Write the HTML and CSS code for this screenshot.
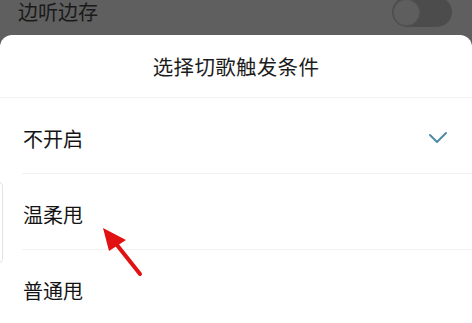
FILE: index.html
```html
<!DOCTYPE html>
<html lang="zh">
<head>
<meta charset="utf-8">
<title>选择切歌触发条件</title>
<link rel="stylesheet" href="styles.css">
</head>
<body>
<div class="page">
  <div class="dim-row">
    <span class="dim-label">边听边存</span>
    <span class="toggle"><span class="knob"></span></span>
  </div>
  <div class="sheet">
    <div class="sheet-title">选择切歌触发条件</div>
    <ul class="options">
      <li class="option">
        <span class="option-label">不开启</span>
        <svg class="check" width="20" height="14" viewBox="0 0 20 14"><path d="M2 4 L9 11 L18 2" fill="none" stroke="#4f8ba8" stroke-width="2" stroke-linecap="round" stroke-linejoin="round"/></svg>
      </li>
      <li class="option"><span class="option-label">温柔甩</span></li>
      <li class="option"><span class="option-label">普通甩</span></li>
    </ul>
  </div>
  <div class="edge-mark"></div>
  <svg class="arrow" width="472" height="323" viewBox="0 0 472 323">
    <line x1="140" y1="274" x2="113" y2="240" stroke="#e01212" stroke-width="4" stroke-linecap="round"/>
    <polygon points="103,228 126,240 109,251" fill="#e01212"/>
  </svg>
</div>
</body>
</html>
```

FILE: styles.css
```css
html, body {
  margin: 0;
  padding: 0;
}
body {
  width: 472px;
  height: 323px;
  overflow: hidden;
  background: #5f5f5f;
  font-family: "Noto Sans CJK SC", "Noto Sans", sans-serif;
}
.page {
  position: relative;
  width: 472px;
  height: 323px;
  display: flex;
  flex-direction: column;
}
.dim-row {
  height: 35px;
  flex: none;
  display: flex;
  justify-content: space-between;
  align-items: flex-start;
  padding: 0 20px 0 18px;
  box-sizing: border-box;
}
.dim-label {
  font-size: 20px;
  line-height: 20px;
  margin-top: 2px;
  color: #1a1a1a;
}
.toggle {
  display: flex;
  align-items: center;
  width: 60px;
  height: 30px;
  margin-top: -3px;
  border-radius: 15px;
  background: #4c4c4c;
  padding: 0 1px;
  box-sizing: border-box;
}
.knob {
  width: 27px;
  height: 27px;
  border-radius: 50%;
  background: #5e5e5e;
  border: 1px solid #555555;
  box-sizing: border-box;
}
.sheet {
  flex: 1;
  background: #ffffff;
  border-radius: 12px 12px 0 0;
  display: flex;
  flex-direction: column;
}
.sheet-title {
  height: 62px;
  flex: none;
  display: flex;
  align-items: center;
  justify-content: center;
  font-size: 20.5px;
  color: #1c1c1c;
  border-bottom: 1px solid #f2f2f2;
  letter-spacing: 0.3px;
}
.options {
  list-style: none;
  margin: 0;
  padding: 0;
}
.option {
  height: 76px;
  margin-left: 22px;
  padding: 6px 24px 0 0;
  box-sizing: border-box;
  display: flex;
  align-items: center;
  justify-content: space-between;
  border-bottom: 1px solid #f2f2f2;
}
.option-label {
  font-size: 20px;
  color: #141414;
  margin-left: 1px;
}
.check {
  display: block;
  margin-top: -2px;
}
.edge-mark {
  position: absolute;
  left: -10px;
  top: 182px;
  width: 13px;
  height: 81px;
  border: 1px solid #e2e2e2;
  border-radius: 4px;
  box-sizing: border-box;
}
.arrow {
  position: absolute;
  left: 0;
  top: 0;
  pointer-events: none;
}
```
